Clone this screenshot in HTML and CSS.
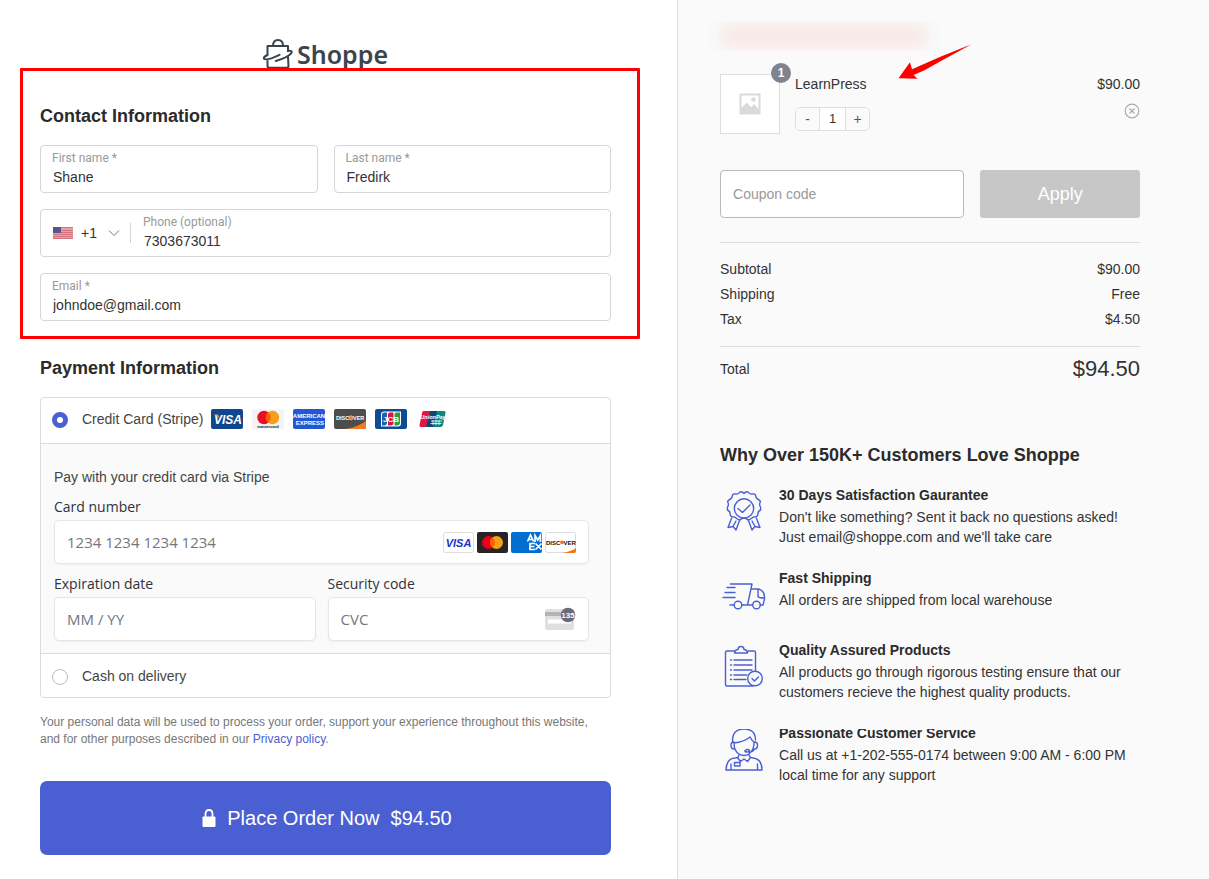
FILE: index.html
```html
<!DOCTYPE html>
<html lang="en">
<head>
<meta charset="utf-8">
<title>Shoppe – Checkout</title>
<link rel="stylesheet" href="styles.css">
</head>
<body>
<div class="page">
  <main class="checkout">
    <header class="logo">
      <svg class="logo-mark" viewBox="0 0 30 30" aria-hidden="true">
        <path d="M4.500 15.500V7h20.500v4M4.500 22v5q0 1.800 1.800 1.800h17.400q1.800 0 1.800-1.800L25 18M10 7q0-6 5-6t5 6"/>
        <path d="M4.500 16Q0 18 1 19.800q2.500 2.200 15.500-4M12.800 22Q25 18.500 28.300 14.200q1.700-3-3.500-2.200"/>
      </svg>
      <span>Shoppe</span>
    </header>

    <section class="contact">
      <h2>Contact Information</h2>
      <div class="fields">
        <div class="field">
          <label for="first">First name *</label>
          <input id="first" type="text" value="Shane">
        </div>
        <div class="field">
          <label for="last">Last name *</label>
          <input id="last" type="text" value="Fredirk">
        </div>
        <div class="field wide phone">
          <div class="country">
            <svg class="flag" viewBox="0 0 20 12" aria-hidden="true">
              <rect width="20" height="12" fill="#e3a3ab"/>
              <path d="M0 .5h20M0 3.500h20M0 5.500h20M0 7.500h20M0 9.500h20M0 11.500h20" stroke="#cf6674" stroke-width=".8"/>
              <rect width="8" height="6" fill="#56568c"/>
            </svg>
            <select aria-label="Country code"><option>+1</option></select>
            <svg class="chevron" viewBox="0 0 12 8" aria-hidden="true"><path d="M1 1.500l5 5 5-5"/></svg>
          </div>
          <div class="phone-number">
            <label for="phone">Phone (optional)</label>
            <input id="phone" type="tel" value="7303673011">
          </div>
        </div>
        <div class="field wide">
          <label for="email">Email *</label>
          <input id="email" type="email" value="johndoe@gmail.com">
        </div>
      </div>
    </section>

    <section class="payment">
      <h2>Payment Information</h2>
      <div class="methods">
        <div class="method with-brands">
          <input type="radio" name="pay" id="stripe" checked>
          <label for="stripe">Credit Card (Stripe)</label>
          <div class="brands">
            <svg viewBox="0 0 32 20" role="img" aria-label="Visa"><rect width="32" height="20" rx="2" fill="#10458f"/><text x="17" y="14.500" font-size="12" font-weight="bold" font-style="italic" fill="#fff" text-anchor="middle">VISA</text><path d="M3 5.500h4l1.500 4Z" fill="#f5a623"/></svg>
            <svg viewBox="0 0 32 20" role="img" aria-label="Mastercard"><rect width="32" height="20" rx="2" fill="#f4f4f4"/><circle cx="12" cy="8.500" r="6.700" fill="#e80f25"/><circle cx="20.500" cy="8.500" r="6.700" fill="#f79f1a"/><path d="M16.250 3.300a6.700 6.700 0 0 1 0 10.400a6.700 6.700 0 0 1 0-10.400Z" fill="#fb5b0f"/><text x="16" y="18.500" font-size="4" font-weight="bold" fill="#222" text-anchor="middle">mastercard</text></svg>
            <svg viewBox="0 0 32 20" role="img" aria-label="American Express"><rect width="32" height="20" rx="2" fill="#2456d6"/><g fill="#fff" font-size="6" font-weight="bold"><text x="16" y="9" text-anchor="middle">AMERICAN</text><text x="31" y="15.500" text-anchor="end">EXPRESS</text></g></svg>
            <svg viewBox="0 0 32 20" role="img" aria-label="Discover"><rect width="32" height="20" rx="2" fill="#4d4d4d"/><path d="M12 20q14-3 20-8v6q0 2-2 2Z" fill="#f5791f"/><text x="2" y="10.800" font-size="5.500" font-weight="bold" fill="#fff">DISC</text><circle cx="17" cy="8.800" r="2" fill="#f5791f" stroke="#fff" stroke-width=".5"/><text x="19" y="10.800" font-size="5.500" font-weight="bold" fill="#fff">VER</text></svg>
            <svg viewBox="0 0 32 20" role="img" aria-label="JCB"><rect width="32" height="20" rx="2" fill="#0e4c96"/><path d="M9 2.500h17v12q0 3-3 3H6v-12q0-3 3-3Z" fill="#fff"/><path d="M9 3.500h3v10q0 3-3 3H7v-11q0-2 2-2Z" fill="#1765ae"/><path d="M15 3.500h3.500v10q0 3-3 3H13v-11q0-2 2-2Z" fill="#d91440"/><path d="M21.500 3.500H25v10q0 3-3 3h-2.500v-11q0-2 2-2Z" fill="#29a03a"/><text x="16" y="12.500" font-size="8" font-weight="bold" fill="#fff" text-anchor="middle">JCB</text></svg>
            <svg viewBox="0 0 32 20" role="img" aria-label="UnionPay"><path d="M7.500 2H15l-4 16H5q-2 0-1.500-2L6 4q.500-2 1.500-2Z" fill="#e3173e"/><path d="M14 2h8l-4 16h-8Z" fill="#10447c"/><path d="M21 2h7q2 0 1.500 2L27 16q-.500 2-2.500 2H17Z" fill="#0c8584"/><text x="17" y="9.500" font-size="5.500" font-weight="bold" font-style="italic" fill="#fff" text-anchor="middle">UnionPay</text><path d="M15 12h11M14.500 14.500h11M17 11v5M20 11v5M23 11v5" stroke="#fff" stroke-width=".8"/></svg>
          </div>
        </div>
        <div class="card-form">
          <p>Pay with your credit card via Stripe</p>
          <div class="card-field wide">
            <label for="card">Card number</label>
            <div class="card-input">
              <input id="card" type="text" placeholder="1234 1234 1234 1234">
              <div class="card-brands">
                <svg viewBox="0 0 31 21" aria-hidden="true"><rect x=".5" y=".5" width="30" height="20" rx="2" fill="#fff" stroke="#ddd"/><text x="15.500" y="14.500" font-size="11" font-weight="bold" font-style="italic" fill="#1a35cb" text-anchor="middle">VISA</text></svg>
                <svg viewBox="0 0 31 21" aria-hidden="true"><rect width="31" height="21" rx="2" fill="#252525"/><circle cx="11.500" cy="10.500" r="6.500" fill="#eb001b"/><circle cx="19.500" cy="10.500" r="6.500" fill="#f79e1b"/><path d="M15.500 5.400a6.500 6.500 0 0 1 0 10.200a6.500 6.500 0 0 1 0-10.200Z" fill="#ff5f00"/></svg>
                <svg viewBox="0 0 31 21" aria-hidden="true"><rect width="31" height="21" rx="2" fill="#016fd0"/><g fill="none" stroke="#fff" stroke-width="1.700"><path d="M16.500 9.500l3-6.500 3 6.500M17.500 7.500h4M24 10V3.500l2.700 4.500 2.700-4.500V10M24 11.500h-5v6h5M19 14.500h4.500M24.500 11.500l6 6M30.500 11.500l-6 6"/></g></svg>
                <svg viewBox="0 0 31 21" aria-hidden="true"><rect x=".5" y=".5" width="30" height="20" rx="2" fill="#fff" stroke="#ddd"/><path d="M17 21q9-1.500 14-5v3q0 2-2 2Z" fill="#f27712"/><text x="1" y="12.500" font-size="6" font-weight="bold" fill="#111">DISC</text><circle cx="17" cy="10.300" r="1.900" fill="#f27712"/><text x="18.500" y="12.500" font-size="6" font-weight="bold" fill="#111">VER</text></svg>
              </div>
            </div>
          </div>
          <div class="card-field">
            <label for="exp">Expiration date</label>
            <div class="card-input"><input id="exp" type="text" placeholder="MM / YY"></div>
          </div>
          <div class="card-field">
            <label for="cvc">Security code</label>
            <div class="card-input">
              <input id="cvc" type="text" placeholder="CVC">
              <svg class="cvc-icon" viewBox="0 0 31 24" aria-hidden="true"><rect x="0" y="2" width="29" height="21" rx="2" fill="#e0e0e0"/><rect y="5" width="29" height="4" fill="#b3b3b8"/><rect x="3" y="12.500" width="23" height="4" rx="1" fill="#fff"/><circle cx="23" cy="8" r="7.300" fill="#6a6b78"/><text x="23" y="11" font-size="8" font-weight="bold" fill="#fff" text-anchor="middle">135</text></svg>
            </div>
          </div>
        </div>
        <div class="method">
          <input type="radio" name="pay" id="cod">
          <label for="cod">Cash on delivery</label>
        </div>
      </div>
      <p class="privacy">Your personal data will be used to process your order, support your experience throughout this website, and for other purposes described in our <a href="#">Privacy policy</a>.</p>
      <button class="place-order" type="button">
        <svg viewBox="0 0 14 18" aria-hidden="true"><path d="M1.500 7.500h11q1 0 1 1V17q0 1-1 1h-11q-1 0-1-1V8.500q0-1 1-1Z" fill="#fff"/><path d="M3.500 8V5q0-4 3.500-4t3.500 4v3" fill="none" stroke="#fff" stroke-width="1.800"/></svg>
        <span>Place Order Now</span><span>$94.50</span>
      </button>
    </section>
  </main>

  <aside class="summary">
    <div class="redacted"></div>
    <div class="product">
      <div class="thumb">
        <svg viewBox="0 0 22 22" aria-hidden="true"><rect x=".5" y=".5" width="21" height="21" rx="1" fill="#d9dade"/><path d="M2.500 2.500h17v13.500l-4.500-5-3 3.500-4-5-5.500 5Z" fill="#fff"/><circle cx="14.500" cy="6.500" r="2.300" fill="#d9dade"/></svg>
        <span class="badge">1</span>
      </div>
      <div class="product-info">
        <span class="name">LearnPress</span>
        <div class="qty">
          <button type="button" aria-label="Decrease">-</button>
          <input type="text" value="1" aria-label="Quantity">
          <button type="button" aria-label="Increase">+</button>
        </div>
      </div>
      <div class="product-price">
        <span>$90.00</span>
        <button class="remove" type="button" aria-label="Remove item"><svg viewBox="0 0 16 16" aria-hidden="true"><circle cx="8" cy="8" r="6.800"/><path d="M5.500 5.500l5 5M10.500 5.500l-5 5"/></svg></button>
      </div>
      <svg class="pointer" viewBox="0 0 76 38" aria-hidden="true"><path d="M74.500 1.300L44 18 27 27.500 16.500 32 20.500 35.700 1.500 35.300 13 19.300 15 26.300 44 13.500Z" fill="#fe0000"/></svg>
    </div>
    <form class="coupon">
      <input type="text" placeholder="Coupon code" aria-label="Coupon code">
      <button type="button">Apply</button>
    </form>
    <dl class="totals">
      <div><dt>Subtotal</dt><dd>$90.00</dd></div>
      <div><dt>Shipping</dt><dd>Free</dd></div>
      <div><dt>Tax</dt><dd>$4.50</dd></div>
    </dl>
    <dl class="grand"><div><dt>Total</dt><dd>$94.50</dd></div></dl>

    <section class="why">
      <h2>Why Over 150K+ Customers Love Shoppe</h2>
      <ul>
        <li>
          <svg viewBox="0 0 48 48" aria-hidden="true"><path d="M24 5.500q2-2.500 4-1.500 1.500 2.500 4 2t3.500 1q0 3 2 4t3 2.500q-1.500 2.500-.500 4.500t.500 4q-2.500 1-2.500 3.500t-2 3.500q-2.500-.500-4 1t-4 2q-2-2-4-2t-4 2q-2.500-.500-4-2t-4-1q-2-1-2-3.500t-2.500-3.500q-.500-2 .500-4t-.500-4.500q1-1.500 3-2.500t2-4q1-1.500 3.500-1t4-2q2-1 4 1.500Z"/><circle cx="24" cy="20.500" r="9.700"/><path d="M18 20.500l4.500 4 7.500-7.500M11.500 30.500L8 39.500l5-1 3 3.500 3.500-9.500M16 33l-3 5.500M36.500 30.500l3.500 9-5-1-3 3.500-3.500-9.500M32 33l3 5.500"/></svg>
          <div><h3>30 Days Satisfaction Gaurantee</h3><p>Don't like something? Sent it back no questions asked! Just email@shoppe.com and we'll take care</p></div>
        </li>
        <li>
          <svg viewBox="0 0 48 48" aria-hidden="true"><path d="M10.500 13H32l-4.500 21H22M31 18h7.500q6.500 1.500 6 10l-1.500 6h-3M32.500 34H27.500M14 34h-4M7 16.500h8M5 21.500h10M3 26.500h12M38 18v7.500q1 1.500 6 1.500"/><circle cx="18" cy="34" r="3.800"/><circle cx="36.500" cy="34" r="3.800"/></svg>
          <div><h3>Fast Shipping</h3><p>All orders are shipped from local warehouse</p></div>
        </li>
        <li>
          <svg viewBox="0 0 48 48" aria-hidden="true"><path d="M14 8H7q-1.500 0-1.500 1.500v32q0 1.500 1.500 1.500h26M28 8h6q1.500 0 1.500 1.500V28M14.500 10h13q-.500-3.500-3.500-3.500 0-3-3-3t-3 3q-3 0-3.500 3.500ZM14 17h18M14 22h18M14 27h18M14 32h13M14 36.500h12M10.500 17h1M10.500 22h1M10.500 27h1M10.500 32h1M10.500 36.500h1"/><circle cx="35" cy="35.500" r="7.300"/><path d="M32 35.500l2.500 2.500 4-4"/></svg>
          <div><h3>Quality Assured Products</h3><p>All products go through rigorous testing ensure that our customers recieve the highest quality products.</p></div>
        </li>
        <li class="cut">
          <svg viewBox="0 0 48 48" aria-hidden="true"><path d="M12.500 16Q12 3 24 3q11.500 0 11.500 11M14 17q10-1 16-6 2 4 4.500 5.500M14 17q0 8 5 11 5 3 10 0 5-4 5-11M14 16q-3 0-3 3.500t3 3.500M34.500 16q3 0 3 3.500t-3 3.500q-1.500 3.500-6 3M25 24.500q3-2 4.500 0-1.500 2.500-4.500 1ZM19 28.500q0 3-3.500 3.500-9 0-9.500 12h36q0-11-9-12-4-.500-4-3.500M17.500 31.500l3 4 3.500-2.500 3.500 2.500 3-4M11 44v-6M37.500 44v-6M14.500 36.500h5.500v3.500h-5.500Z"/></svg>
          <div><h3>Passionate Customer Service</h3><p>Call us at +1-202-555-0174 between 9:00 AM - 6:00 PM local time for any support</p></div>
        </li>
      </ul>
    </section>
  </aside>
</div>
</body>
</html>
```

FILE: styles.css
```css
* { box-sizing: border-box; }

body {
  margin: 0;
  background: #fff;
  color: #333;
  font: 14px/20px "Liberation Sans", Arial, sans-serif;
}

h2, h3, p, ul, dl, dd { margin: 0; padding: 0; }
input, button, select { font: inherit; color: inherit; margin: 0; }
a { color: #4a60d2; text-decoration: none; }

h2 {
  margin-bottom: 16px;
  font-size: 18px;
  line-height: 26px;
  color: #2b2b2b;
}

.page {
  display: grid;
  grid-template-columns: 56fr 44fr;
  min-height: 100vh;
}

.checkout { padding: 38px 66px 24px 40px; }

.logo {
  display: flex;
  justify-content: center;
  align-items: center;
  gap: 4px;
  height: 32px;
  margin-bottom: 33px;
  color: #3b444c;
  font: 600 25px/32px "Noto Sans", "Open Sans", sans-serif;
}
.logo-mark {
  width: 30px;
  height: 30px;
  fill: none;
  stroke: #3b444c;
  stroke-width: 2;
  stroke-linecap: round;
  stroke-linejoin: round;
}

.contact { position: relative; margin-bottom: 34px; }
.contact::after {
  content: "";
  position: absolute;
  inset: -35px -29px -18px -20px;
  border: 3px solid #fe0000;
  border-radius: 1px;
  pointer-events: none;
}

.fields {
  display: grid;
  grid-template-columns: 1fr 1fr;
  gap: 16px;
}
.wide { grid-column: 1 / -1; }

.field {
  height: 48px;
  padding: 4px 11px;
  border: 1px solid #d5d5d5;
  border-radius: 4px;
  background: #fff;
}
.field label {
  display: block;
  font: 12px/16px Roboto, sans-serif;
  color: #999;
}
.field input {
  display: block;
  width: 100%;
  height: 22px;
  padding: 0 1px;
  border: 0;
  outline: 0;
  background: none;
}

.phone { display: flex; }
.country {
  display: flex;
  align-items: center;
  height: 20px;
  margin: 9px 12px 0 0;
  padding-left: 1px;
  border-right: 1px solid #d5d5d5;
}
.flag { width: 20px; height: 12px; }
.country select {
  width: 24px;
  margin: 0 3px 0 8px;
  padding: 0;
  border: 0;
  background: none;
  appearance: none;
}
.chevron {
  width: 12px;
  height: 8px;
  margin: 0 10px 0 0;
  fill: none;
  stroke: #777;
}
.phone-number { flex: 1; }

.methods {
  overflow: hidden;
  border: 1px solid #dcdcdc;
  border-radius: 4px;
}
.method {
  display: flex;
  align-items: center;
  height: 43px;
  padding: 0 11px;
  color: #444;
}
.with-brands { height: 45px; padding-bottom: 3px; }
.method input {
  flex: none;
  width: 16px;
  height: 16px;
  margin: 2px 14px 0 0;
  border: 1px solid #b8bcc4;
  border-radius: 50%;
  background: #fff;
  appearance: none;
}
.method input:checked { border: 5px solid #4a60d2; }
.brands {
  display: flex;
  gap: 9px;
  margin-left: 8px;
}
.brands svg { width: 32px; height: 20px; }

.card-form {
  display: grid;
  grid-template-columns: 1fr 1fr;
  gap: 10px 12px;
  padding: 23px 21px 12px 13px;
  border: 1px solid #dcdcdc;
  border-width: 1px 0;
  background: #fafafa;
  color: #444;
}
.card-form p { grid-column: 1 / -1; }
.card-field label {
  display: block;
  margin-bottom: 3px;
  font: 14px/20px "Open Sans", sans-serif;
  color: #30313d;
}
.card-input {
  display: flex;
  align-items: center;
  height: 44px;
  padding: 0 12px;
  border: 1px solid #e6e6e6;
  border-radius: 5px;
  background: #fff;
  box-shadow: 0 1px 2px rgba(0, 0, 0, .05);
}
.card-input input {
  flex: 1;
  min-width: 0;
  padding: 0;
  border: 0;
  outline: 0;
  background: none;
  font: 15px/20px "Open Sans", sans-serif;
}
.card-input input::placeholder { color: #757680; }
.card-brands { display: flex; gap: 3px; }
.card-brands svg { width: 31px; height: 21px; }
.cvc-icon { width: 31px; height: 24px; }

.privacy {
  margin: 16px 0 33px;
  font-size: 12px;
  line-height: 17px;
  color: #777;
}

.place-order {
  display: flex;
  justify-content: center;
  align-items: center;
  gap: 11px;
  width: 100%;
  height: 74px;
  padding: 0 0 0 3px;
  border: 0;
  border-radius: 7px;
  background: #4a60d2;
  color: #fff;
  font-size: 20px;
}
.place-order svg { width: 14px; height: 18px; }

.summary {
  padding: 21px 69px 24px 42px;
  border-left: 1px solid #dedede;
  background: #fafafa;
}

.redacted {
  width: 236px;
  height: 30px;
  margin: 0 0 23px -14px;
  overflow: hidden;
  background: #fafafa;
}
.redacted::before {
  content: "";
  display: block;
  height: 22px;
  margin: 4px 16px;
  background: #f7e6e4;
  filter: blur(8px);
}

.product {
  position: relative;
  display: flex;
  justify-content: space-between;
  height: 60px;
  margin-bottom: 36px;
}
.thumb {
  position: relative;
  display: grid;
  place-items: center;
  width: 60px;
  border: 1px solid #dedede;
  background: #fff;
}
.thumb svg { width: 22px; height: 22px; }
.badge {
  position: absolute;
  top: -12px;
  right: -12px;
  width: 20px;
  height: 20px;
  border-radius: 50%;
  background: #81818f;
  color: #fff;
  font-size: 12px;
  font-weight: bold;
  text-align: center;
}
.product-info { flex: 1; padding-left: 15px; }
.name { display: block; margin-bottom: 13px; }
.qty {
  display: flex;
  width: 75px;
  height: 24px;
  overflow: hidden;
  border: 1px solid #dddde8;
  border-radius: 5px;
}
.qty button {
  flex: 1;
  padding: 0;
  border: 0;
  background: #fafafa;
  color: #555;
}
.qty input {
  width: 27px;
  padding: 0;
  border: 1px solid #dddde8;
  border-width: 0 1px;
  background: #fff;
  font-size: 13px;
  text-align: center;
}
.product-price {
  display: flex;
  flex-direction: column;
  align-items: flex-end;
  gap: 9px;
}
.remove {
  width: 16px;
  height: 16px;
  padding: 0;
  border: 0;
  background: none;
}
.remove svg {
  display: block;
  fill: none;
  stroke: #aaa;
  stroke-width: 1.2;
}
.pointer {
  position: absolute;
  left: 177px;
  top: -31px;
  width: 76px;
  height: 38px;
}

.coupon {
  display: flex;
  gap: 16px;
  height: 48px;
}
.coupon input {
  flex: 1;
  min-width: 0;
  padding: 0 12px;
  border: 1px solid #b8b8b8;
  border-radius: 4px;
  background: #fff;
}
.coupon input::placeholder { color: #999; }
.coupon button {
  width: 38%;
  border: 0;
  border-radius: 3px;
  background: #c7c7c7;
  color: #fff;
  font-size: 18px;
}

.totals {
  margin: 24px 0 0;
  padding: 14px 0;
  border-top: 1px solid #dcdcdc;
  line-height: 25px;
}
.totals div, .grand div {
  display: flex;
  justify-content: space-between;
  align-items: center;
}
.grand {
  margin-bottom: 60px;
  padding-top: 9px;
  border-top: 1px solid #dcdcdc;
  line-height: 26px;
}
.grand dd { font-size: 22px; }

.why h2 { margin-bottom: 17px; }
.why ul {
  display: flex;
  flex-direction: column;
  gap: 21px;
  list-style: none;
}
.why li { display: flex; gap: 11px; }
.why li > svg {
  flex: none;
  width: 48px;
  height: 48px;
  margin-top: 3px;
  fill: none;
  stroke: #4a60d2;
  stroke-width: 1.4;
  stroke-linecap: round;
  stroke-linejoin: round;
}
.why h3 {
  margin-bottom: 2px;
  font-size: 14px;
  line-height: 20px;
  color: #2b2b2b;
}
.why .cut { clip-path: inset(6px 0 0 0); }
```
